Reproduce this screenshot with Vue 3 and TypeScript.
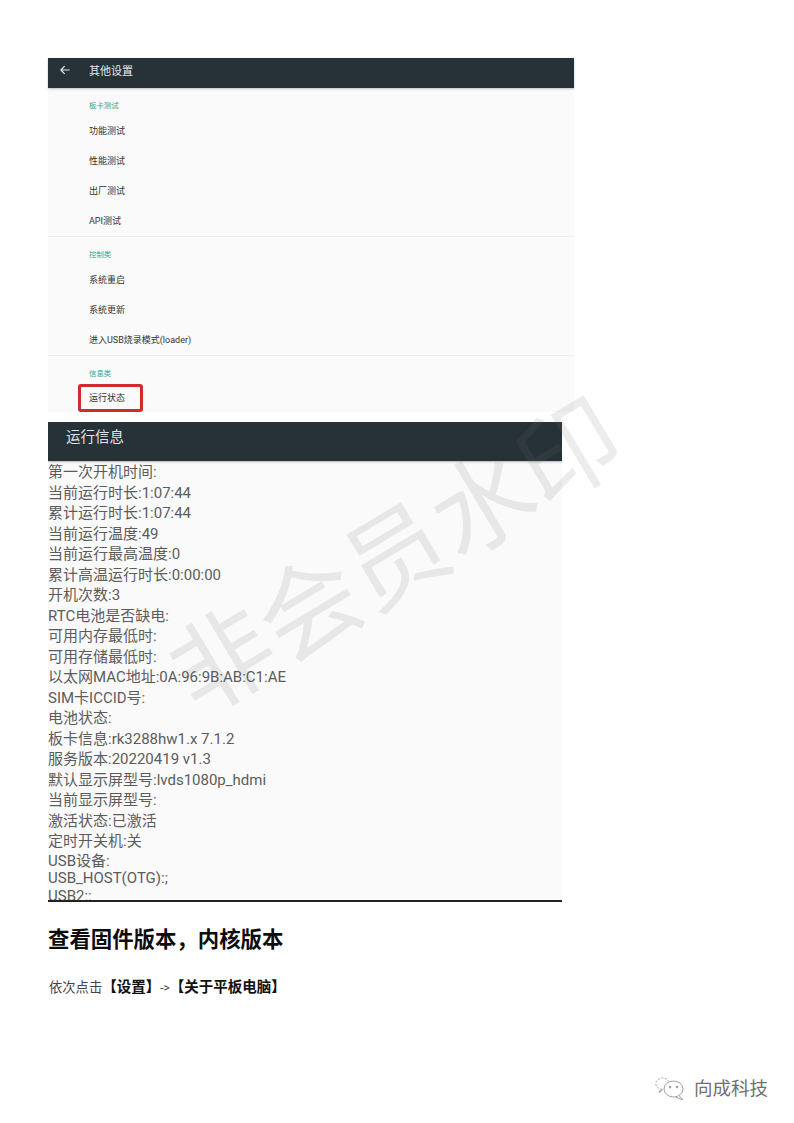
<script setup lang="ts">
const settingSections = [
  { label: '板卡测试', items: ['功能测试', '性能测试', '出厂测试', 'API测试'] },
  { label: '控制类', items: ['系统重启', '系统更新', '进入USB烧录模式(loader)'] }
]

const infoLines = [
  '第一次开机时间:',
  '当前运行时长:1:07:44',
  '累计运行时长:1:07:44',
  '当前运行温度:49',
  '当前运行最高温度:0',
  '累计高温运行时长:0:00:00',
  '开机次数:3',
  'RTC电池是否缺电:',
  '可用内存最低时:',
  '可用存储最低时:',
  '以太网MAC地址:0A:96:9B:AB:C1:AE',
  'SIM卡ICCID号:',
  '电池状态:',
  '板卡信息:rk3288hw1.x 7.1.2',
  '服务版本:20220419 v1.3',
  '默认显示屏型号:lvds1080p_hdmi',
  '当前显示屏型号:',
  '激活状态:已激活',
  '定时开关机:关'
]

const usbLines = ['USB设备:', 'USB_HOST(OTG):;', 'USB2::']
</script>

<template>
  <div class="page">
    <section class="settings">
      <header class="settings-bar">
        <svg class="back" width="10" height="10" viewBox="0 0 10 10" fill="none" stroke="#e8eaea" stroke-width="1.2">
          <path d="M9.6 5H1M4.6 1.2 0.9 5l3.7 3.8" />
        </svg>
        <span>其他设置</span>
      </header>
      <div v-for="section in settingSections" :key="section.label" class="group">
        <div class="group-label">{{ section.label }}</div>
        <div v-for="item in section.items" :key="item" class="row">{{ item }}</div>
      </div>
      <div class="last-group">
        <div class="group-label">信息类</div>
        <div class="row-marked">运行状态</div>
      </div>
    </section>

    <section class="info">
      <header class="info-bar">运行信息</header>
      <div class="info-body">
        <div v-for="line in infoLines" :key="line" class="info-line">{{ line }}</div>
        <div class="usb">
          <div v-for="line in usbLines" :key="line">{{ line }}</div>
        </div>
      </div>
    </section>

    <h2 class="title">查看固件版本，内核版本</h2>
    <p class="steps">依次点击<b>【设置】</b><span class="arrow">-&gt;</span><b>【关于平板电脑】</b></p>

    <footer class="brand">
      <svg width="30" height="24" viewBox="0 0 30 24" fill="none" stroke="#a2a2a2" stroke-width="1">
        <path d="M7.5 12.5C3.5 12 0.8 9.5 0.8 6.5 0.8 3.5 4 1 7.5 1c2.8 0 5.2 1.3 6.2 3.3" stroke-dasharray="2 1.6" />
        <path d="M5.5 12.5 4 15.5l3.6-2.5" />
        <ellipse cx="18.5" cy="12" rx="9.5" ry="8" />
        <path d="M24 18.5 28 23l-7-2.8" />
        <circle cx="15" cy="10" r="0.9" fill="#888" />
        <circle cx="22" cy="10" r="0.9" fill="#888" />
      </svg>
      <span>向成科技</span>
    </footer>

    <div class="watermark">非会员水印</div>
  </div>
</template>

<style scoped>
.page {
  position: relative;
  display: flex;
  flex-direction: column;
  align-items: flex-start;
  box-sizing: border-box;
  width: 794px;
  height: 1123px;
  padding: 58px 0 21px 48px;
  overflow: hidden;
  background: #fff;
  font-family: Roboto, "Noto Sans CJK SC", sans-serif;
}

.settings {
  width: 526px;
  height: 354px;
  background: #fafafa;
  color: #333;
}

.settings-bar {
  display: flex;
  align-items: center;
  box-sizing: border-box;
  height: 30px;
  padding: 0 0 6px 12px;
  background: #263238;
  box-shadow: 0 1px 2px rgba(0, 0, 0, 0.25);
  color: #e6e9ea;
  font-size: 11px;
}

.back {
  margin-right: 19px;
}

.group {
  border-bottom: 1px solid #eee;
}

.group-label {
  height: 28px;
  padding: 12px 0 0 41px;
  box-sizing: border-box;
  color: #2fa58f;
  font-size: 7.4px;
  line-height: 11px;
}

.row {
  height: 30px;
  padding-left: 41px;
  font-size: 9px;
  line-height: 30px;
}

.row-marked {
  width: 65px;
  height: 28px;
  margin-left: 30px;
  padding-left: 8px;
  box-sizing: border-box;
  border: 3px solid #d12a2a;
  border-radius: 3px;
  font-size: 9px;
  line-height: 22px;
}

.info {
  width: 514px;
  height: 480px;
  margin-top: 10px;
  background: #fafafa;
  border-bottom: 2px solid #222;
  box-sizing: border-box;
  overflow: hidden;
}

.info-bar {
  height: 39px;
  padding-left: 18px;
  background: #263238;
  box-shadow: 0 1px 2px rgba(0, 0, 0, 0.3);
  color: #dfe3e4;
  font-size: 14.5px;
  line-height: 31px;
}

.info-body {
  padding-top: 1px;
  color: #5c5c5c;
  font-size: 15px;
}

.info-line {
  height: 20.5px;
  line-height: 20.5px;
}

.usb {
  margin-top: 1px;
  line-height: 17.5px;
}

.title {
  margin: 24px 0 0;
  color: #0c0c0c;
  font-size: 21.4px;
  font-weight: 700;
  line-height: 28px;
}

.steps {
  margin: 26px 0 0 1px;
  color: #444;
  font-size: 13.3px;
  line-height: 16px;
}

.steps b {
  color: #111;
  font-size: 14.5px;
  font-weight: 700;
}

.arrow {
  font-size: 12px;
}

.brand {
  display: flex;
  align-items: center;
  gap: 9px;
  margin: auto 26px 0 auto;
  color: #707070;
  font-size: 18.5px;
  line-height: 26px;
}

.watermark {
  position: absolute;
  left: 397px;
  top: 558px;
  transform: translate(-50%, -50%) rotate(-31deg);
  color: rgba(110, 110, 110, 0.13);
  font-size: 101px;
  line-height: 1;
  white-space: nowrap;
  pointer-events: none;
}
</style>
